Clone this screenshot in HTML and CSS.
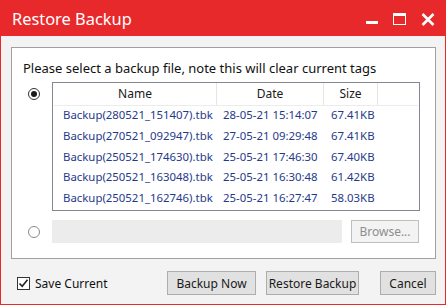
FILE: index.html
```html
<!DOCTYPE html>
<html lang="en">
<head>
  <meta charset="UTF-8">
  <title>Restore Backup</title>
  <link rel="stylesheet" href="styles.css">
</head>
<body>
  <div class="window">
    <div class="titlebar">
      <div class="title">Restore Backup</div>
      <div class="controls">
        <span class="ctl ctl-min"><svg width="13" height="13" viewBox="0 0 13 13"><rect x="0" y="8" width="12" height="3" fill="#fff"/></svg></span>
        <span class="ctl ctl-max"><svg width="14" height="13" viewBox="0 0 14 13"><rect x="0.5" y="0.5" width="12" height="11" fill="none" stroke="#fff"/><rect x="0" y="0" width="13" height="3" fill="#fff"/></svg></span>
        <span class="ctl ctl-close"><svg width="14" height="13" viewBox="0 0 14 13"><path d="M1.5 1 L12.5 12 M12.5 1 L1.5 12" stroke="#fff" stroke-width="2.6"/></svg></span>
      </div>
    </div>

    <div class="content">
      <div class="groupbox">
        <div class="prompt">Please select a backup file, note this will clear current tags</div>

        <div class="option">
          <span class="radio checked"></span>
          <div class="listbox">
            <div class="lv-row lv-head">
              <div class="c-name">Name</div>
              <div class="c-date">Date</div>
              <div class="c-size">Size</div>
              <div class="c-fill"></div>
            </div>
            <div class="lv-row">
              <div class="c-name">Backup(280521_151407).tbk</div>
              <div class="c-date">28-05-21 15:14:07</div>
              <div class="c-size">67.41KB</div>
            </div>
            <div class="lv-row">
              <div class="c-name">Backup(270521_092947).tbk</div>
              <div class="c-date">27-05-21 09:29:48</div>
              <div class="c-size">67.41KB</div>
            </div>
            <div class="lv-row">
              <div class="c-name">Backup(250521_174630).tbk</div>
              <div class="c-date">25-05-21 17:46:30</div>
              <div class="c-size">67.40KB</div>
            </div>
            <div class="lv-row">
              <div class="c-name">Backup(250521_163048).tbk</div>
              <div class="c-date">25-05-21 16:30:48</div>
              <div class="c-size">61.42KB</div>
            </div>
            <div class="lv-row">
              <div class="c-name">Backup(250521_162746).tbk</div>
              <div class="c-date">25-05-21 16:27:47</div>
              <div class="c-size">58.03KB</div>
            </div>
          </div>
        </div>

        <div class="option option-file">
          <span class="radio"></span>
          <div class="filepath"></div>
          <button class="btn btn-browse" disabled>Browse...</button>
        </div>
      </div>

      <div class="footer">
        <label class="check">
          <span class="box"><svg width="11" height="11" viewBox="0 0 11 11"><path d="M1.5 5.5 L4.2 8.3 L9.5 1.8" fill="none" stroke="#222" stroke-width="1.6"/></svg></span>
          Save Current
        </label>
        <div class="buttons">
          <button class="btn btn-now">Backup Now</button>
          <button class="btn btn-restore">Restore Backup</button>
          <button class="btn btn-cancel">Cancel</button>
        </div>
      </div>
    </div>
  </div>
</body>
</html>
```

FILE: styles.css
```css
body {
  margin: 0;
  background-color: #fff;
  font-family: "Noto Sans", "Open Sans", sans-serif;
  font-size: 12px;
  color: #1a1a1a;
}
.window {
  width: 446px;
  height: 305px;
  box-sizing: border-box;
  border: 1px solid #e8292b;
  border-top: none;
  background-color: #f3f3f3;
  display: flex;
  flex-direction: column;
}
.titlebar {
  height: 36px;
  background-color: #e8292b;
  display: flex;
  align-items: center;
  justify-content: space-between;
  padding-left: 11px;
  flex-shrink: 0;
}
.title {
  color: #fff;
  font-size: 16.4px;
  margin-top: 1px;
}
.controls {
  display: flex;
  align-items: center;
  margin-right: 10px;
  margin-top: 2px;
}
.ctl {
  display: flex;
}
.ctl-min {
  margin-right: 14px;
}
.ctl-max {
  margin-right: 14px;
}
.content {
  padding: 11px 9px 0 10px;
  display: flex;
  flex-direction: column;
}
.groupbox {
  height: 212px;
  box-sizing: border-box;
  border: 1px solid #a0a0a0;
  background-color: #fff;
  padding: 12px 0 0 11px;
}
.prompt {
  font-size: 13px;
  line-height: 16px;
  color: #111;
}
.option {
  display: flex;
  align-items: flex-start;
}
.radio {
  width: 12px;
  height: 12px;
  box-sizing: border-box;
  border: 1px solid #333;
  border-radius: 50%;
  background-color: #fff;
  margin: 0 12px 0 5px;
  position: relative;
  flex-shrink: 0;
}
.radio.checked {
  margin-top: 12px;
}
.radio.checked::after {
  content: "";
  position: absolute;
  left: 2px;
  top: 2px;
  width: 6px;
  height: 6px;
  border-radius: 50%;
  background-color: #1a1a1a;
}
.listbox {
  margin-top: 6px;
  width: 368px;
  height: 129px;
  box-sizing: border-box;
  border: 1px solid #828790;
  background-color: #fff;
  padding: 0 1px;
  font-size: 11.4px;
}
.lv-row {
  display: flex;
  height: 20.8px;
  line-height: 20.8px;
  color: #1f3a8a;
}
.lv-head {
  height: 22px;
  line-height: 22px;
  font-size: 12px;
  color: #1a1a1a;
  border-bottom: 1px solid #ececec;
  margin-bottom: -1px;
}
.c-name {
  width: 163px;
  padding-left: 9px;
  box-sizing: border-box;
}
.c-date {
  width: 107px;
  padding-left: 6px;
  box-sizing: border-box;
}
.c-size {
  width: 54px;
  padding-left: 7px;
  box-sizing: border-box;
}
.lv-head .c-name,
.lv-head .c-date,
.lv-head .c-size {
  text-align: center;
  padding-left: 0;
  border-right: 1px solid #e5e5e5;
}
.c-fill {
  flex: 1;
}
.option-file {
  margin-top: 9px;
  align-items: center;
}
.radio:not(.checked) {
  border-color: #888;
}
.filepath {
  width: 290px;
  height: 23px;
  background-color: #ececec;
}
.btn {
  font-family: inherit;
  font-size: 12px;
  height: 24px;
  box-sizing: border-box;
  border: 1px solid #adadad;
  background-color: #e1e1e1;
  color: #1a1a1a;
  padding: 0;
}
.btn-browse {
  margin-left: 9px;
  width: 68px;
  height: 23px;
  background-color: #f3f3f3;
  border-color: #bfbfbf;
  color: #8d8d8d;
}
.footer {
  display: flex;
  align-items: center;
  justify-content: space-between;
  margin-top: 12px;
}
.check {
  display: flex;
  align-items: center;
  margin-left: 6px;
  color: #111;
}
.box {
  width: 13px;
  height: 13px;
  box-sizing: border-box;
  border: 1px solid #333;
  background-color: #fff;
  display: flex;
  align-items: center;
  justify-content: center;
  margin-right: 5px;
}
.buttons {
  display: flex;
}
.btn-now {
  width: 89px;
}
.btn-restore {
  width: 93px;
  margin-left: 10px;
}
.btn-cancel {
  width: 56px;
  margin-left: 21px;
}
```
